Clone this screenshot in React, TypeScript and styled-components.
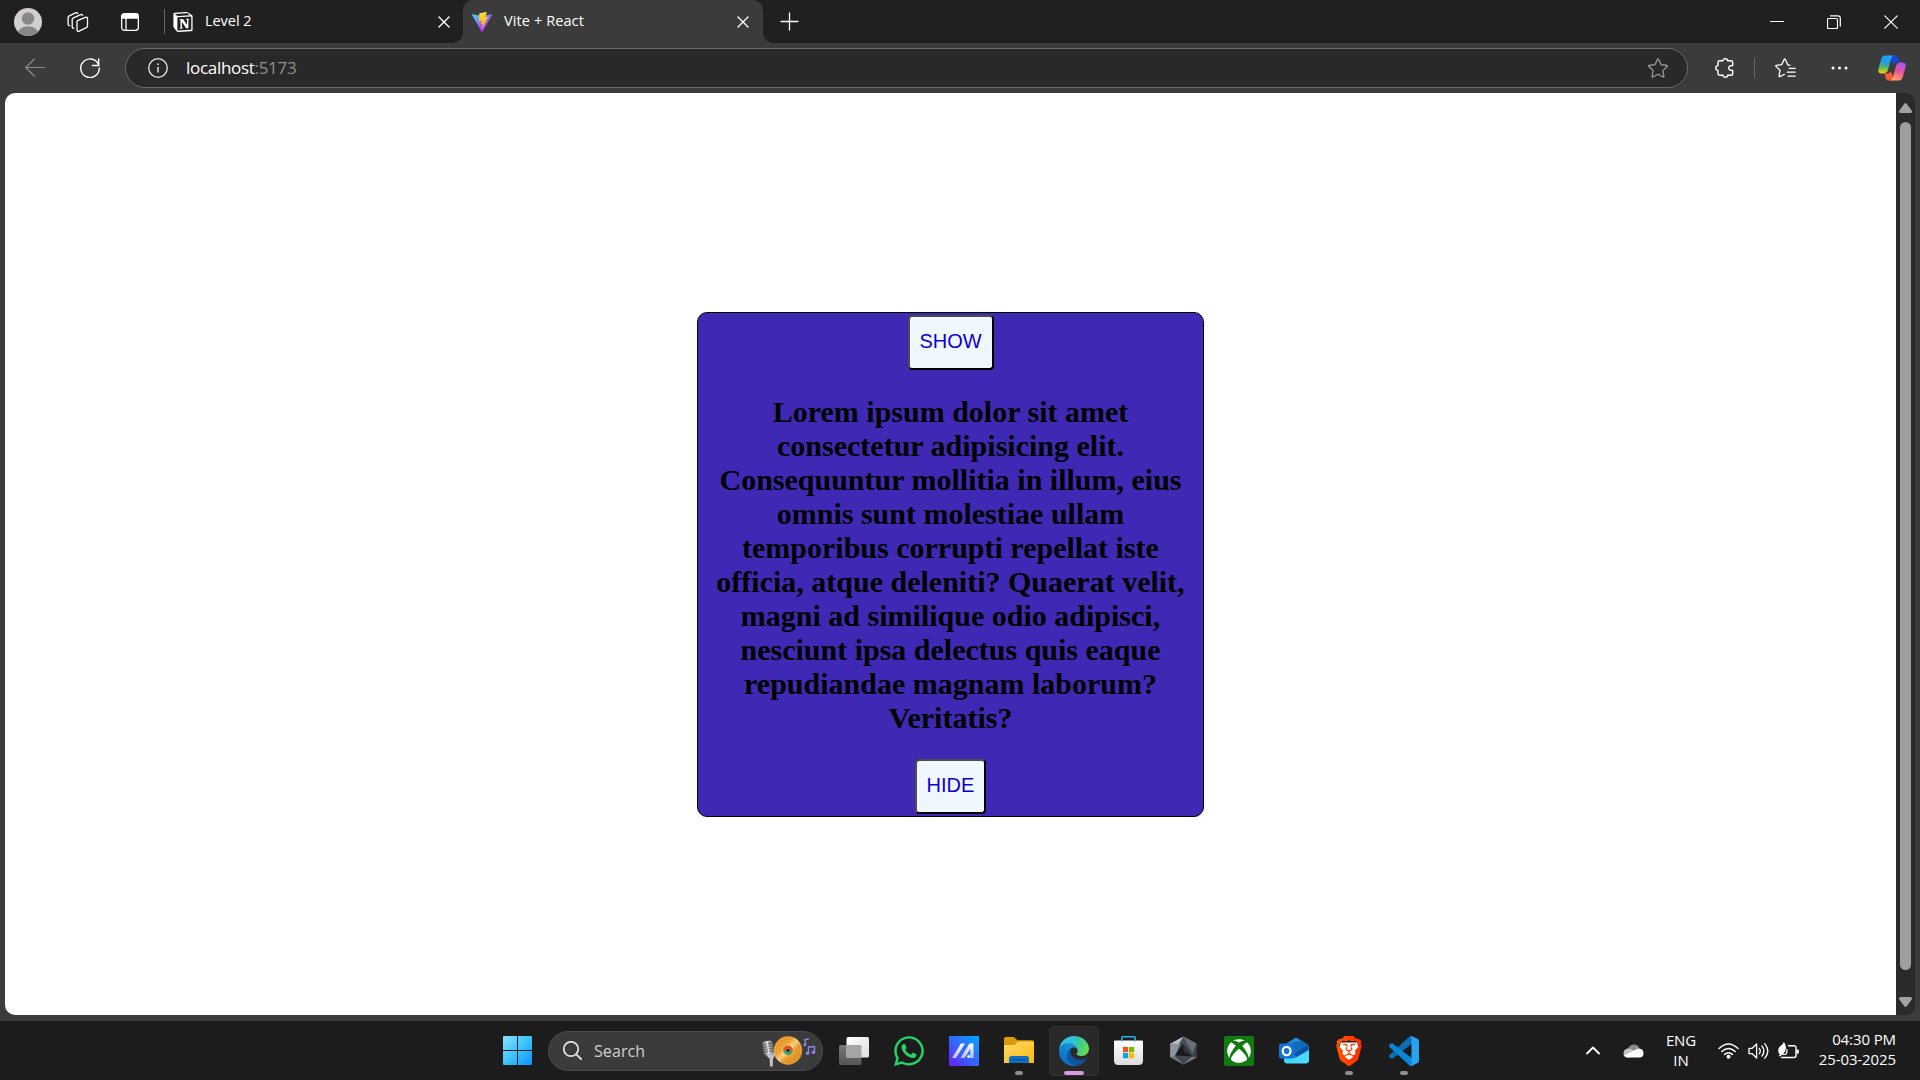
import React from 'react';
import styled, { createGlobalStyle } from 'styled-components';
import { FaWhatsapp, FaXbox } from 'react-icons/fa';
import { SiBrave, SiNotion } from 'react-icons/si';

const GlobalStyle = createGlobalStyle`
  html, body { margin: 0; padding: 0; background: #3b3b3b; }
  *, *::before, *::after { box-sizing: border-box; }
  svg { display: block; flex: none; }
`;

const ui = '"Open Sans", "Noto Sans", sans-serif';

const Screen = styled.div`
  display: flex;
  flex-direction: column;
  width: 1920px;
  height: 1080px;
  overflow: hidden;
  background: #3b3b3b;
  color: #fff;
  font-family: ${ui};
`;

const Slot = styled.div<{ $w: number; $ml?: number }>`
  display: flex;
  flex: none;
  align-items: center;
  justify-content: center;
  width: ${p => p.$w}px;
  height: 100%;
  margin-left: ${p => p.$ml ?? 0}px;
`;

const Spacer = styled.div`
  flex: 1;
`;

/* ---------- browser chrome ---------- */

const TabStrip = styled.div`
  display: flex;
  align-items: center;
  height: 43px;
  background: #202020;
`;

const Divider = styled.div<{ $h: number; $ml?: number }>`
  flex: none;
  width: 1px;
  height: ${p => p.$h}px;
  margin-left: ${p => p.$ml ?? 0}px;
  background: #666;
`;

const Tab = styled.div<{ $active?: boolean }>`
  position: relative;
  display: flex;
  flex: none;
  align-items: center;
  width: ${p => (p.$active ? 300 : 298)}px;
  height: 43px;
  padding: 0 ${p => (p.$active ? '14px 0 9px' : '13px 0 8px')};
  border-radius: 10px 10px 0 0;
  background: ${p => (p.$active ? '#3b3b3b' : 'transparent')};

  &::before,
  &::after {
    content: '';
    display: ${p => (p.$active ? 'block' : 'none')};
    position: absolute;
    bottom: 0;
    width: 10px;
    height: 10px;
  }
  &::before {
    left: -10px;
    background: radial-gradient(circle at 0 0, transparent 9.5px, #3b3b3b 10px);
  }
  &::after {
    right: -10px;
    background: radial-gradient(circle at 100% 0, transparent 9.5px, #3b3b3b 10px);
  }
`;

const TabTitle = styled.span<{ $ls: number }>`
  flex: 1;
  margin-left: 12px;
  padding-bottom: 2px;
  font-size: 14.5px;
  line-height: 20px;
  letter-spacing: ${p => p.$ls}px;
  white-space: nowrap;
`;

const Toolbar = styled.div`
  display: flex;
  align-items: center;
  height: 50px;
`;

const AddressBar = styled.div`
  display: flex;
  flex: none;
  align-items: center;
  width: 1563px;
  height: 40px;
  margin-left: 15px;
  padding: 0 19px 0 22px;
  border: 1px solid #6a6a6a;
  border-radius: 20px;
  background: #292929;
`;

const Url = styled.span`
  flex: 1;
  margin-left: 18px;
  padding-bottom: 1px;
  font-size: 17px;
  line-height: 24px;
  letter-spacing: -0.3px;
`;

const Port = styled.span`
  color: #8f8f8f;
`;

/* ---------- page ---------- */

const Viewport = styled.div`
  display: flex;
  height: 922px;
  margin: 0 5px 6px;
`;

const Page = styled.main`
  display: flex;
  flex: none;
  align-items: flex-start;
  justify-content: center;
  width: 1891px;
  padding-top: 219px;
  border-radius: 10px 0 0 10px;
  background: #fff;
`;

const Card = styled.section`
  display: flex;
  flex-direction: column;
  align-items: center;
  width: 507px;
  height: 505px;
  padding: 2px 0;
  border: 1px solid #000;
  border-radius: 10px;
  background: #3f29b4;
`;

const CardButton = styled.button<{ $w: number }>`
  flex: none;
  width: ${p => p.$w}px;
  height: 55px;
  padding: 0 0 2px;
  border: 2px solid;
  border-color: #4c4c4c #000 #000 #4c4c4c;
  border-radius: 4px;
  background: aliceblue;
  color: #0f00c8;
  font-family: "Liberation Sans", Arial, sans-serif;
  font-size: 20px;
`;

const Lorem = styled.h2`
  margin: 25px 0 24px;
  padding: 0 12px;
  color: #000;
  font-family: "Liberation Serif", "Times New Roman", serif;
  font-size: 30px;
  font-weight: 700;
  line-height: 34px;
  text-align: center;
`;

const ScrollTrack = styled.div`
  display: flex;
  flex-direction: column;
  align-items: center;
  width: 19px;
  padding: 10px 0 8px;
  border-radius: 0 9px 9px 0;
  background: #2b2b2b;
`;

const Thumb = styled.div`
  width: 11px;
  height: 848px;
  margin-top: 9px;
  border-radius: 6px;
  background: #9f9f9f;
`;

/* ---------- taskbar ---------- */

const Taskbar = styled.footer`
  display: flex;
  align-items: center;
  height: 59px;
  padding: 0 24px 0 490px;
  background: #1c1c1c;
`;

const SearchBox = styled.div`
  display: flex;
  flex: none;
  align-items: center;
  width: 275px;
  height: 40px;
  margin: 0 3px;
  padding: 0 6px 0 14px;
  border: 1px solid #4a4a4a;
  border-radius: 20px;
  background: #3b3b3b;
`;

const SearchText = styled.span`
  flex: 1;
  margin-left: 12px;
  color: #d0d0d0;
  font-size: 16px;
  line-height: 22px;
  letter-spacing: 0.1px;
`;

const AppSlot = styled.div`
  display: flex;
  flex: none;
  justify-content: center;
  width: 55px;
`;

const AppTile = styled.div<{ $active?: boolean }>`
  position: relative;
  display: flex;
  align-items: center;
  justify-content: center;
  width: 50px;
  height: 50px;
  border: 1px solid ${p => (p.$active ? '#323232' : 'transparent')};
  border-radius: 5px;
  background: ${p => (p.$active ? '#292929' : 'transparent')};
`;

const Indicator = styled.span<{ $active?: boolean }>`
  position: absolute;
  bottom: 0;
  width: ${p => (p.$active ? 20 : 8)}px;
  height: 4px;
  border-radius: 2px;
  background: ${p => (p.$active ? '#d898e0' : '#8e8e8e')};
`;

const TrayText = styled.div<{ $align: 'center' | 'right'; $w: number; $ml: number; $up: number }>`
  flex: none;
  width: ${p => p.$w}px;
  margin-left: ${p => p.$ml}px;
  padding-bottom: ${p => p.$up}px;
  font-size: 15px;
  line-height: 20px;
  letter-spacing: -0.1px;
  text-align: ${p => p.$align};
  white-space: nowrap;
`;

/* ---------- icons ---------- */

const Stroke = ({ w, h = w, d, color = '#fff', sw = 1.4 }: { w: number; h?: number; d: string; color?: string; sw?: number }) => (
  <svg width={w} height={h} viewBox={`0 0 ${w} ${h}`} fill="none" stroke={color} strokeWidth={sw} strokeLinecap="round" strokeLinejoin="round">
    <path d={d} />
  </svg>
);

const Avatar = () => (
  <svg width="28" height="28" viewBox="0 0 28 28">
    <clipPath id="avatar"><circle cx="14" cy="14" r="14" /></clipPath>
    <g clipPath="url(#avatar)">
      <rect width="28" height="28" fill="#d2d0ce" />
      <circle cx="14" cy="10.5" r="6.2" fill="#8a8886" />
      <ellipse cx="14" cy="26" rx="10.5" ry="7.7" fill="#8a8886" />
    </g>
  </svg>
);

const Workspaces = () => (
  <Stroke w={22} sw={1.3} d="M10.4 9.6 18.4 6.3q2.1-.6 2.1 1.4v7.2q0 1.3-1.2 1.8l-7.1 3.4q-2.2.8-2.2-1.3v-7.4q0-1.2.4-1.8zM6.8 17.2q-1.6.3-1.6-1.5V8.6q0-1.3 1.2-1.8l7.2-3.2q1.6-.5 2 .8M2.7 14.6q-1.6.2-1.6-1.5V6.8q0-1.3 1.2-1.9l6.2-3q1.6-.6 2.2.6" />
);

const TabActions = () => (
  <svg width="18" height="18" viewBox="0 0 18 18" fill="none" stroke="#fff" strokeWidth="1.3">
    <rect x=".65" y=".65" width="16.7" height="16.7" rx="2.8" />
    <path d="M1 3.4Q1 1 3.4 1h11.2Q17 1 17 3.4V5H1z" fill="#fff" />
    <path d="M5 5v12" />
  </svg>
);

const ViteLogo = () => (
  <svg width="20" height="20" viewBox="0 0 256 257">
    <defs>
      <linearGradient id="viteA" x1="0" x2=".55" y1=".1" y2=".85"><stop stopColor="#41d1ff" /><stop offset="1" stopColor="#bd34fe" /></linearGradient>
      <linearGradient id="viteB" x1=".4" x2=".5" y1="0" y2="1"><stop stopColor="#ffea83" /><stop offset=".1" stopColor="#ffdd35" /><stop offset="1" stopColor="#ffa800" /></linearGradient>
    </defs>
    <path fill="url(#viteA)" d="M255.153 37.938 134.897 252.976c-2.483 4.44-8.862 4.466-11.382.048L.875 37.958c-2.746-4.814 1.371-10.646 6.827-9.67l120.385 21.517a6.537 6.537 0 0 0 2.322-.004l117.867-21.483c5.438-.991 9.574 4.796 6.877 9.62Z" />
    <path fill="url(#viteB)" d="M185.432.063 96.44 17.501a3.268 3.268 0 0 0-2.634 3.014l-5.474 92.456a3.268 3.268 0 0 0 3.997 3.378l24.777-5.718c2.318-.535 4.413 1.507 3.936 3.838l-7.361 36.047c-.495 2.426 1.782 4.5 4.151 3.78l15.304-4.649c2.372-.72 4.652 1.36 4.15 3.788l-11.698 56.621c-.732 3.542 3.979 5.473 5.943 2.437l1.313-2.028 72.516-144.72c1.215-2.423-.88-5.186-3.54-4.672l-25.505 4.922c-2.396.462-4.435-1.77-3.759-4.114l16.646-57.705c.677-2.35-1.37-4.583-3.769-4.113Z" />
  </svg>
);

const CloseX = () => <Stroke w={12} h={12} d="M1 1 11 11M11 1 1 11" sw={1.4} />;

const Info = () => (
  <svg width="20" height="20" viewBox="0 0 20 20" fill="none" stroke="#e6e6e6" strokeWidth="1.3">
    <circle cx="10" cy="10" r="9.3" />
    <path d="M10 9v5.5" strokeWidth="1.5" />
    <circle cx="10" cy="6.2" r=".9" fill="#e6e6e6" stroke="none" />
  </svg>
);

const Favorites = () => (
  <Stroke w={21} h={20} sw={1.3} d="M15 7.2 12.9 7 10.2 1.3Q9.7.6 9.2 1.3L6.7 6.6 1.3 7.4Q.4 7.7 1 8.4L5 12.3 4 18Q4 19 4.9 18.6L9.4 16.2M14.2 10.3h6M12.3 14.2h7.9M13.2 18.2h7" />
);

const CopilotLogo = () => (
  <svg width="28" height="26" viewBox="0 0 28 26">
    <defs>
      <linearGradient id="copA" x1=".4" x2=".3" y1="0" y2="1"><stop stopColor="#1ba5f5" /><stop offset=".4" stopColor="#1f9de0" /><stop offset=".7" stopColor="#66bb55" /><stop offset="1" stopColor="#ffd20a" /></linearGradient>
      <linearGradient id="copB" x1=".7" x2=".4" y1="0" y2="1"><stop stopColor="#a855f7" /><stop offset=".5" stopColor="#e8569b" /><stop offset="1" stopColor="#ffa65c" /></linearGradient>
    </defs>
    <path d="M13 .5h4.300q2.300 0 3 2.500l1.200 4.500h-3.200q-2.200 0-3 2.600L13 4z" fill="#1546d8" />
    <path d="M15 25.500h-4.300q-2.300 0-3-2.500L6.500 18.500h3.200q2.200 0 3-2.600L15 22z" fill="#fb5b3b" />
    <path d="M7.500.5h8.200q-1.700.5-2.300 2.700L10 14.700q-1.100 3.800-4.300 3.800H3.500Q-.5 18.500.5 14L3.200 4Q4.300.5 7.500.5z" fill="url(#copA)" />
    <path d="M20.500 25.500h-8.200q1.700-.5 2.300-2.700L18 11.300q1.100-3.800 4.300-3.800h2.200q4 0 3 4.500L24.800 22q-1.100 3.500-4.300 3.500z" fill="url(#copB)" />
  </svg>
);

const WindowsLogo = () => (
  <svg width="29" height="29" viewBox="0 0 29 29">
    <defs><linearGradient id="win" gradientUnits="userSpaceOnUse" x1="0" y1="0" x2="29" y2="29"><stop stopColor="#8be2ff" /><stop offset=".5" stopColor="#3cc3fc" /><stop offset="1" stopColor="#0a94f8" /></linearGradient></defs>
    <path fill="url(#win)" d="M1 0h13v14H0V1q0-1 1-1zM15 0h13q1 0 1 1v13H15zM0 15h14v14H1q-1 0-1-1zM15 15h14v13q0 1-1 1H15z" />
  </svg>
);

const SearchArt = () => (
  <svg width="54" height="32" viewBox="0 0 54 32">
    <defs>
      <linearGradient id="disc" x1="0" y1="0" x2="1" y2="1"><stop stopColor="#e8982a" /><stop offset=".35" stopColor="#f0a634" /><stop offset=".5" stopColor="#ffd98a" /><stop offset=".6" stopColor="#eea23a" /><stop offset="1" stopColor="#d98a1e" /></linearGradient>
      <linearGradient id="mic" x1="0" y1="0" x2="1" y2="0"><stop stopColor="#6e6e6e" /><stop offset=".4" stopColor="#cfcfcf" /><stop offset="1" stopColor="#777" /></linearGradient>
    </defs>
    <circle cx="26" cy="15.500" r="14.200" fill="url(#disc)" />
    <g fill="none" stroke="#c97a1a" strokeWidth=".6" opacity=".6"><circle cx="26" cy="15.500" r="11.500" /><circle cx="26" cy="15.500" r="8.800" /></g>
    <circle cx="26" cy="15.500" r="4.700" fill="#3aa66b" />
    <path d="M21.300 15.500a4.700 4.700 0 0 1 9.400 0z" fill="#e4502e" />
    <circle cx="26" cy="15.500" r="1.500" fill="#222" />
    <path d="M4 18h9.500l-1.500 4.500-1 1-.3 8H8l-.4-8L5.500 22z" fill="#c2c2c2" />
    <g transform="rotate(-10 6 13)">
      <rect x="1" y="5.800" width="10.500" height="14.500" rx="3" fill="url(#mic)" />
      <path d="M1.300 9h10M1 11.500h10.500M1 14h10.500M1.300 16.500h10" stroke="#4c4c4c" strokeWidth=".7" />
      <path d="M6.200 6.500v13" stroke="#ededed" strokeWidth="1" />
    </g>
    <g fill="none" stroke="#8b86e8" strokeWidth="1.400">
      <path d="M43.800 9.500 42.800 4.800 46.800 4M46.500 18v-6l6-.5v6" />
    </g>
    <g fill="#8b86e8"><circle cx="42.800" cy="9.700" r="1.500" /><circle cx="45.500" cy="18.200" r="1.800" /><circle cx="51.500" cy="17.300" r="1.800" /></g>
  </svg>
);

const TaskView = () => (
  <svg width="30" height="28" viewBox="0 0 30 28">
    <defs>
      <linearGradient id="tvA" x1="0" y1="0" x2="1" y2="1"><stop stopColor="#fff" /><stop offset="1" stopColor="#dedede" /></linearGradient>
      <linearGradient id="tvB" x1="0" y1="0" x2="0" y2="1"><stop stopColor="#777" /><stop offset="1" stopColor="#555" /></linearGradient>
    </defs>
    <rect y="8" width="22.500" height="20" rx="1.500" fill="url(#tvB)" />
    <rect x="7.500" y="0" width="22.500" height="20.500" rx="1.500" fill="url(#tvA)" />
    <path d="M7.500 8h13.500q1.500 0 1.500 1.500v11H7.500z" fill="#a5a5a5" />
  </svg>
);

const MaLogo = () => (
  <svg width="30" height="30" viewBox="0 0 30 30">
    <defs>
      <linearGradient id="ma" x1="1" y1="0" x2="0" y2="1"><stop stopColor="#00a5ff" /><stop offset=".5" stopColor="#3268ff" /><stop offset="1" stopColor="#6a1cff" /></linearGradient>
      <linearGradient id="maS" x1="0" y1="0" x2="0" y2="1"><stop stopColor="#fff" /><stop offset="1" stopColor="#b9bfff" /></linearGradient>
    </defs>
    <rect width="30" height="30" fill="url(#ma)" />
    <path d="M12 7.500h4L7 22H3z" fill="url(#maS)" />
    <path d="M20.500 7.500H24.500V22H21.300V12.700L15.500 22h-4z" fill="url(#maS)" />
    <circle cx="19.700" cy="20.500" r="1.500" fill="#fff" />
  </svg>
);

const Folder = () => (
  <svg width="30" height="27" viewBox="0 0 30 27">
    <defs><linearGradient id="fold" x1="0" y1="0" x2="1" y2="1"><stop stopColor="#ffdb6b" /><stop offset="1" stopColor="#fcb90f" /></linearGradient></defs>
    <path d="M1.500 0h8.300l3.700 3.200H28q2 0 2 2V10H0V1.500Q0 0 1.500 0z" fill="#d99b06" />
    <path d="M0 8h9.500q1.500 0 2.500-1.500L14 4.500h15q1 0 1 1V26H0z" fill="url(#fold)" />
    <path d="M5 26v-4.500Q5 19 7.500 19h15q2.500 0 2.500 2.500V26z" fill="#0f6fc0" />
    <path d="M8.500 22.700h13" stroke="#0a4a86" strokeWidth="1.200" />
  </svg>
);

const EdgeLogo = () => (
  <svg width="30" height="30" viewBox="0 0 256 256">
    <defs>
      <linearGradient id="eA" x1="0" x2="1" y1=".5" y2=".5"><stop stopColor="#0c59a4" /><stop offset="1" stopColor="#114a8b" /></linearGradient>
      <linearGradient id="eB" x1=".8" x2=".3" y1="0" y2="1"><stop stopColor="#1b9de2" /><stop offset=".5" stopColor="#1280d0" /><stop offset="1" stopColor="#0f6cc4" /></linearGradient>
      <linearGradient id="eC" x1="0" x2="1" y1=".3" y2=".6"><stop stopColor="#35c1f1" /><stop offset=".4" stopColor="#2fc0d6" /><stop offset=".75" stopColor="#48cf7c" /><stop offset="1" stopColor="#6be050" /></linearGradient>
    </defs>
    <path fill="url(#eA)" d="M231 190.500c-3.400 1.800-6.900 3.400-10.500 4.700a101.300 101.300 0 0 1-35.900 6.400c-47.300 0-88.500-32.500-88.500-74.300a31.500 31.500 0 0 1 16.400-27.300c-42.800 1.800-53.800 46.400-53.800 72.500 0 74 68.100 81.400 82.800 81.400 7.900 0 19.800-2.300 27-4.600l1.300-.4a128.300 128.300 0 0 0 66.600-52.800 4 4 0 0 0-5.400-5.600z" />
    <path fill="url(#eB)" d="M105.700 241.400a79.200 79.200 0 0 1-22.700-21.300 80.700 80.700 0 0 1 29.500-120c3.100-1.500 8.400-4.100 15.500-4a32.400 32.400 0 0 1 25.700 13 31.900 31.900 0 0 1 6.300 18.700c0-.2 24.500-79.600-80-79.600-43.900 0-80 41.700-80 78.200a130.200 130.200 0 0 0 12.100 56 128 128 0 0 0 156.400 67 75.500 75.500 0 0 1-62.800-8z" />
    <path fill="url(#eC)" d="M152.300 148.900c-.9 1-3.400 2.500-3.400 5.600 0 2.600 1.700 5.200 4.800 7.300 14.400 10 41.500 8.700 41.600 8.700 10.700 0 21.100-2.900 30.300-8.300a61.400 61.400 0 0 0 30.400-52.900c.3-22.400-8-37.300-11.300-43.900C223.500 23.900 177.700 0 128 0A128 128 0 0 0 0 126.200c.5-36.500 36.800-66 80-66 3.500 0 23.500.3 42 10.100 16.300 8.600 24.900 18.900 30.800 29.200 6.200 10.700 7.300 24.100 7.300 29.500s-2.700 13.300-7.800 19.900z" />
  </svg>
);

const StoreLogo = () => (
  <svg width="29" height="29" viewBox="0 0 29 29">
    <defs><linearGradient id="store" x1="0" y1="0" x2="0" y2="1"><stop stopColor="#fff" /><stop offset="1" stopColor="#dcdcdc" /></linearGradient></defs>
    <path d="M0 5.500Q0 4.500 1 4.500h27q1 0 1 1V24.500q0 4.500-4.500 4.500h-20Q0 29 0 24.500z" fill="url(#store)" />
    <path d="M7.800 5.500V2q0-1.200 1.200-1.200h11q1.200 0 1.200 1.200V5.500" fill="none" stroke="#28b4ea" strokeWidth="1.500" />
    <path d="M9 11h5.200v5.200H9z" fill="#f25022" /><path d="M15 11h5.200v5.200H15z" fill="#7fba00" />
    <path d="M9 17h5.200v5.200H9z" fill="#00a4ef" /><path d="M15 17h5.200v5.200H15z" fill="#ffb900" />
  </svg>
);

const HexLogo = () => (
  <svg width="27" height="29" viewBox="0 0 27 29">
    <path d="M13.500.5 26.500 7.500v14l-13 7-13-7v-14z" fill="#4a4f57" />
    <path d="M13.500.5.5 7.500v14L13.500.5z" fill="#b4bcc8" />
    <path d="M.5 7.500v14l4.500-1.800L10 8z" fill="#8b95a3" />
    <path d="M13.500.5 26.500 7.500 24 19z" fill="#6a7079" />
    <path d="M26.500 7.500v14l-5-1z" fill="#3d4147" />
    <path d="M.5 21.500 5 19.700l16.500.8 5 1-13 7z" fill="#6f757f" />
    <path d="M13.500 28.500 5 20h17z" fill="#42464d" />
    <path d="M13 7.500 22.500 20.500 5 19.500z" fill="#17191c" />
    <path d="M13 7.500 22.500 20.500 14 16z" fill="#30343a" />
  </svg>
);

const XboxLogo = () => (
  <svg width="30" height="30" viewBox="0 0 30 30">
    <rect width="30" height="30" rx="2" fill="#107c10" />
    <FaXbox x={2.800} y={2.800} size={24.400} color="#fff" />
  </svg>
);

const OutlookLogo = () => (
  <svg width="30" height="27" viewBox="0 0 30 27">
    <defs><linearGradient id="ol" x1="0" y1="0" x2="1" y2="1"><stop stopColor="#35c8f5" /><stop offset="1" stopColor="#4fe0ff" /></linearGradient></defs>
    <path d="M5 8 17 .5 29.500 8 12 20 5 18z" fill="#1c8fdc" />
    <path d="M9 7 22 3.600 29 8 16 17z" fill="#0f6cbd" />
    <path d="M30 9v14q0 3.500-3.500 3.500H8Q5 26.500 5 23V20z" fill="url(#ol)" />
    <path d="M29.700 8v5L16 21l-1-5z" fill="#0a4fa8" />
    <rect y="6.500" width="15.500" height="15" rx="2" fill="#1373d1" />
    <ellipse cx="7.600" cy="14" rx="3.900" ry="4.200" fill="none" stroke="#fff" strokeWidth="2.200" />
  </svg>
);

const BraveLogo = () => (
  <svg width="30" height="30" viewBox="0 0 30 30">
    <defs><linearGradient id="brave" x1="0" y1="0" x2="1" y2="0"><stop stopColor="#ff5500" /><stop offset="1" stopColor="#ff2a00" /></linearGradient></defs>
    <path d="M7 6.500h16l2 5.500-4 9-6 5-6-5-4-9z" fill="#fff" />
    <SiBrave size={30} fill="url(#brave)" />
  </svg>
);

const CodeLogo = () => (
  <svg width="30" height="30" viewBox="0 0 100 100">
    <path fill="#0a6fb5" d="M96.460 10.800 75.860.88a6.230 6.230 0 0 0-7.100 1.200L1.300 63.580a4.170 4.170 0 0 0 0 6.170l5.500 5.010a4.170 4.170 0 0 0 5.330.24l81.200-61.600c2.730-2.070 6.650-.13 6.650 3.300v-.24c0-2.400-1.380-4.600-3.540-5.630z" />
    <path fill="#0a86d6" d="M96.460 89.200l-20.600 9.920a6.230 6.230 0 0 1-7.100-1.200L1.300 36.420a4.170 4.170 0 0 1 0-6.170l5.500-5.010a4.170 4.170 0 0 1 5.330-.24l81.200 61.600c2.730 2.070 6.650.13 6.650-3.300v.24c0 2.400-1.380 4.600-3.540 5.630z" />
    <path fill="#27a3f2" d="M75.860 99.130a6.230 6.230 0 0 1-7.100-1.210c2.300 2.300 6.250.67 6.250-2.590V4.670c0-3.260-3.950-4.900-6.250-2.600a6.230 6.230 0 0 1 7.100-1.200l20.600 9.900A6.250 6.250 0 0 1 100 16.400v67.200c0 2.400-1.370 4.600-3.540 5.630l-20.600 9.900z" />
  </svg>
);

const Cloud = () => (
  <svg width="21" height="14" viewBox="0 0 21 14">
    <path d="M5 4.500Q7 .5 11 .5q4.200 0 5.500 4L9 9z" fill="#8a8a8a" />
    <path d="M4.700 13.500Q.5 13.500.5 9.200.7 5 5 4.500q3-.2 5 1.500l6 4-10 3.500z" fill="#c4c4c4" />
    <path d="M20.500 9.200q0 4.300-4.200 4.300H4.700q-2.600 0-3.600-2L13 5.500q2-1.200 4-.8 3.500.8 3.500 4.500z" fill="#fff" />
  </svg>
);

const Wifi = () => (
  <svg width="21" height="16" viewBox="0 0 21 16" fill="none" stroke="#fff" strokeWidth="1.400" strokeLinecap="round">
    <path d="M1 5.600q9.500-9 19 0M3.800 8.600q6.700-6.200 13.400 0M6.600 11.400q3.900-3.400 7.800 0" />
    <circle cx="10.500" cy="13.700" r="1.300" fill="#fff" />
  </svg>
);

const Speaker = () => (
  <Stroke w={21} h={18} sw={1.300} d="M1 6.300h3.200L8.600 2v14L4.200 11.700H1zM11.300 6.300q2 2.700 0 5.400M14 4q3.800 5 0 10M16.700 1.700q6.300 7.300 0 14.600" />
);

const Battery = () => (
  <svg width="21" height="18" viewBox="0 0 21 18">
    <path d="M10.500 3.700h5.500q2 0 2 2v7.800q0 2-2 2H3.500" fill="none" stroke="#fff" strokeWidth="1.400" strokeLinecap="round" />
    <path d="M18.500 7.500h1.500q.8 0 .8.800v2.600q0 .8-.8.800h-1.500z" fill="#fff" />
    <path d="M5.800 0Q8 2 8 5.500q-.2 4-2.800 6.800L1.500 14.500.8 13.500 2 12.200Q-.3 11 .3 7.500.8 4.500 3.500 3.200 5.200 2 5.800 0z" fill="#fff" />
    <path d="M8.800 7.300q.8 3.200-1.300 5.200H5.200" fill="none" stroke="#fff" strokeWidth="1.200" strokeLinecap="round" />
  </svg>
);

const ArrowUp = () => <svg width="13" height="10" viewBox="0 0 13 10"><path d="M5.300.8q1.200-1.400 2.400 0l5 6.700Q13.500 9.800 11.500 10h-10Q-.5 9.800.3 7.500z" fill="#a3a3a3" /></svg>;
const ArrowDown = () => <svg width="13" height="10" viewBox="0 0 13 10"><path d="M5.300 9.200q1.200 1.400 2.400 0l5-6.700Q13.500.2 11.500 0h-10Q-.5.2.3 2.500z" fill="#a3a3a3" /></svg>;

type AppEntry = { name: string; icon: React.ReactNode; running?: boolean; active?: boolean };

const apps: AppEntry[] = [
  { name: 'taskview', icon: <TaskView /> },
  { name: 'whatsapp', icon: <FaWhatsapp size={34} color="#25d366" /> },
  { name: 'ma', icon: <MaLogo /> },
  { name: 'explorer', icon: <Folder />, running: true },
  { name: 'edge', icon: <EdgeLogo />, running: true, active: true },
  { name: 'store', icon: <StoreLogo /> },
  { name: 'hex', icon: <HexLogo /> },
  { name: 'xbox', icon: <XboxLogo /> },
  { name: 'outlook', icon: <OutlookLogo /> },
  { name: 'brave', icon: <BraveLogo />, running: true },
  { name: 'code', icon: <CodeLogo />, running: true },
];

export default function App() {
  return (
    <Screen>
      <GlobalStyle />
      <TabStrip>
        <Slot $w={56}><Avatar /></Slot>
        <Slot $w={44}><Workspaces /></Slot>
        <Slot $w={60}><TabActions /></Slot>
        <Divider $h={25} $ml={4} />
        <Tab>
          <SiNotion size={20} color="#fff" />
          <TabTitle $ls={-0.05}>Level 2</TabTitle>
          <CloseX />
        </Tab>
        <Tab $active>
          <ViteLogo />
          <TabTitle $ls={0.1}>Vite + React</TabTitle>
          <CloseX />
        </Tab>
        <Slot $w={52}><Stroke w={19} d="M9.500 1v17M1 9.500h17" sw={1.300} /></Slot>
        <Spacer />
        <Slot $w={57}><Stroke w={14} d="M.5 6.500h13" sw={1} /></Slot>
        <Slot $w={57}><Stroke w={14} d="M2 3.500h7.500q1 0 1 1v8q0 1-1 1h-8q-1 0-1-1v-8q0-1 1-1zM3.500 .8h7.500q2.300 0 2.300 2.300v8" sw={1.200} /></Slot>
        <Slot $w={58}><Stroke w={14} d="M.8.8l12.400 12.400M13.200.8.8 13.200" sw={1.200} /></Slot>
      </TabStrip>

      <Toolbar>
        <Slot $w={70}><Stroke w={20} d="M19.300 9.500H.8M9.300 1 .8 9.500 9.300 18" color="#8b8b8b" sw={1.200} /></Slot>
        <Slot $w={40}><Stroke w={20} d="M18.900 7.500A9.300 9.300 0 1 0 19.300 10M18.700 1v6.500h-6.300" sw={1.400} /></Slot>
        <AddressBar>
          <Info />
          <Url>localhost<Port>:5173</Port></Url>
          <Stroke w={20} color="#9a9a9a" sw={1.300} d="M9.500 1.300q.5-.8 1 0l2.600 5.400 5.800.8q.8.3.2 1l-4.200 4.100 1 5.900q0 .9-.8.500L10 16.300 4.900 19q-.8.400-.8-.5l1-5.900L.9 8.500q-.6-.7.2-1l5.800-.8z" />
        </AddressBar>
        <Slot $w={59} $ml={7}><Stroke w={20} sw={1.400} d="M4.800 2.800h3.300Q8 .8 10.300.8t2.300 2h3.300q1.800 0 1.800 1.800v2.900q-4-.1-4 2.500t4 2.500v2.900q0 1.800-1.800 1.800h-3.300q0 2-2.300 2t-2.200-2H4.800Q3 17.200 3 15.400v-3Q.8 12.300.8 10T3 7.600v-3q0-1.800 1.800-1.800z" /></Slot>
        <Divider $h={20} />
        <Slot $w={60}><Favorites /></Slot>
        <Slot $w={49}>
          <svg width="17" height="4" viewBox="0 0 17 4" fill="#fff"><circle cx="2" cy="2" r="1.500" /><circle cx="8.500" cy="2" r="1.500" /><circle cx="15" cy="2" r="1.500" /></svg>
        </Slot>
        <Slot $w={56}><CopilotLogo /></Slot>
      </Toolbar>

      <Viewport>
        <Page>
          <Card>
            <CardButton $w={86}>SHOW</CardButton>
            <Lorem>
              Lorem ipsum dolor sit amet consectetur adipisicing elit. Consequuntur mollitia in illum, eius omnis sunt
              molestiae ullam temporibus corrupti repellat iste officia, atque deleniti? Quaerat velit, magni ad
              similique odio adipisci, nesciunt ipsa delectus quis eaque repudiandae magnam laborum? Veritatis?
            </Lorem>
            <CardButton $w={71}>HIDE</CardButton>
          </Card>
        </Page>
        <ScrollTrack>
          <ArrowUp />
          <Thumb />
          <Spacer />
          <ArrowDown />
        </ScrollTrack>
      </Viewport>

      <Taskbar>
        <AppSlot><WindowsLogo /></AppSlot>
        <SearchBox>
          <Stroke w={19} d="M8 15.200A7.200 7.200 0 1 0 8 .8a7.200 7.200 0 0 0 0 14.400zM13.300 13.300 18 18" color="#e0e0e0" sw={1.800} />
          <SearchText>Search</SearchText>
          <SearchArt />
        </SearchBox>
        {apps.map(app => (
          <AppSlot key={app.name}>
            <AppTile $active={app.active}>
              {app.icon}
              {app.running && <Indicator $active={app.active} />}
            </AppTile>
          </AppSlot>
        ))}
        <Spacer />
        <Slot $w={40}><Stroke w={14} h={9} d="M1 7.500 7 1.500 13 7.500" sw={1.800} /></Slot>
        <Slot $w={40}><Cloud /></Slot>
        <TrayText $align="center" $w={40} $ml={8} $up={2}>ENG<br />IN</TrayText>
        <Slot $w={30} $ml={12}><Wifi /></Slot>
        <Slot $w={30}><Speaker /></Slot>
        <Slot $w={30}><Battery /></Slot>
        <TrayText $align="right" $w={93} $ml={0} $up={4}>04:30 PM<br />25-03-2025</TrayText>
      </Taskbar>
    </Screen>
  );
}
